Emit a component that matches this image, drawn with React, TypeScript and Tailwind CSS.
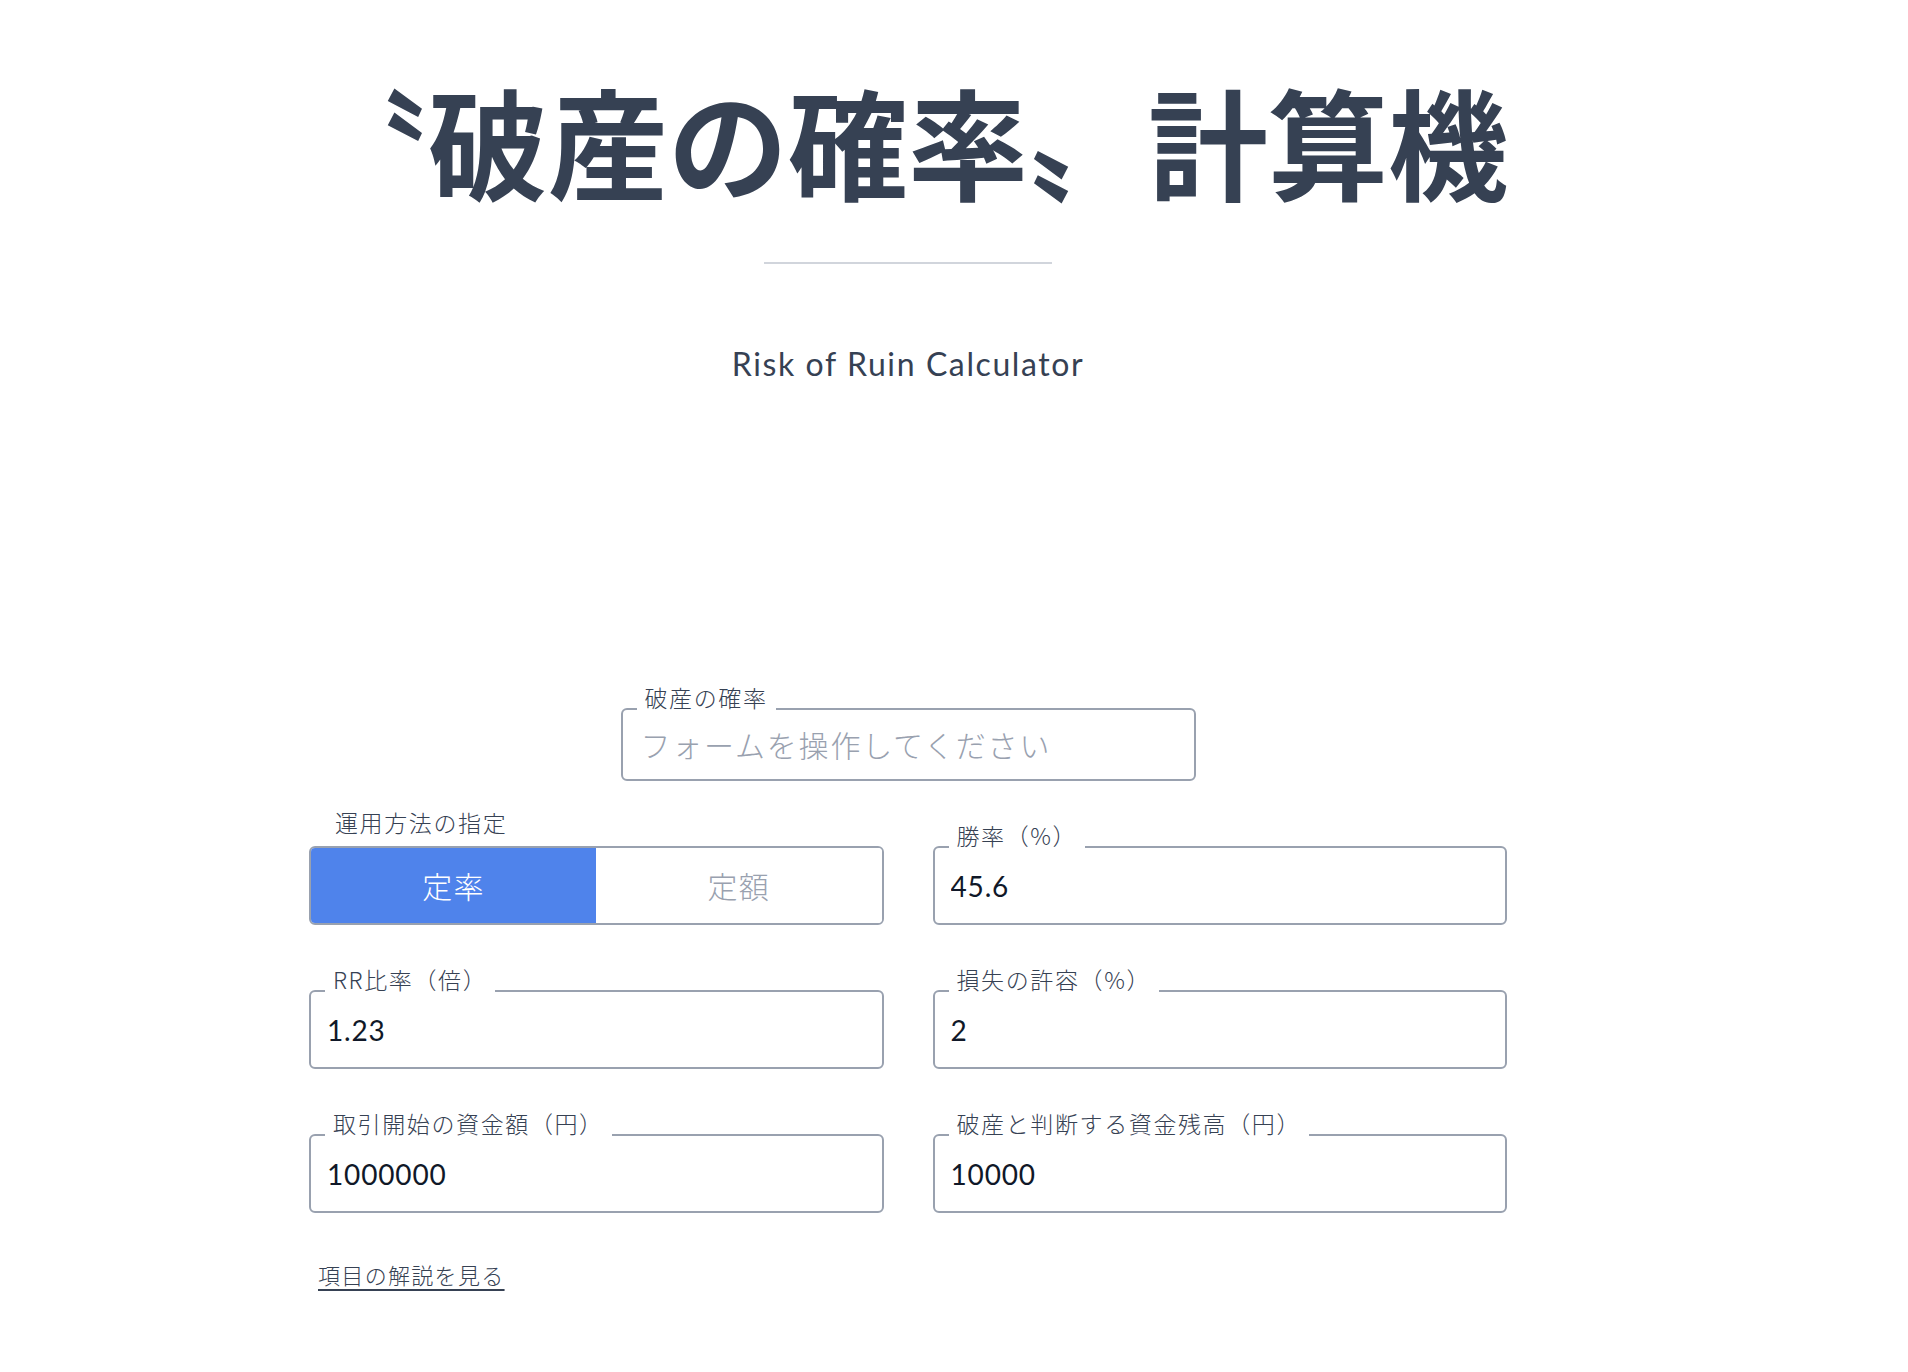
import React, { useState } from 'react';

const jp = "font-['Noto_Sans_CJK_JP',sans-serif]";
const num = "font-['Lato','Noto_Sans_CJK_JP',sans-serif]";
const labelText = `text-[23px] leading-[26px] font-light tracking-[0.07em] text-gray-700 ${jp}`;

interface FieldProps {
  label: string;
  value?: string;
}

const Field: React.FC<FieldProps> = ({ label, value }) => {
  const [v, setV] = useState(value ?? '');
  return (
    <div className="relative">
      <span className={`absolute left-[16px] top-[-24px] bg-white px-[8px] ${labelText}`}>{label}</span>
      <input
        type="text"
        value={v}
        onChange={(e) => setV(e.target.value)}
        className={`h-[79px] w-full rounded-md border-2 border-gray-400 bg-white px-[16px] text-[28px] tracking-[0.03em] text-gray-900 outline-none ${num}`}
      />
    </div>
  );
};

export default function App() {
  const [mode, setMode] = useState<'rate' | 'fixed'>('rate');

  return (
    <div className="min-h-screen bg-white">
      <div className="w-[1816px] pb-24">
        <header className="flex flex-col items-center pt-[74px]">
          <h1 className={`text-[120px] leading-[1.1] font-bold text-gray-700 ${jp}`}>〝破産の確率〟計算機</h1>
          <div className="mt-[56px] h-[2px] w-[288px] bg-gray-300" />
          <p className={`mt-[76px] text-[32px] tracking-[0.05em] text-gray-700 ${num}`}>Risk of Ruin Calculator</p>
        </header>

        <main className="mx-auto mt-[320px] w-[1198px]">
          <div className="mx-auto w-[575px]">
            <div className="relative">
              <span className={`absolute left-[16px] top-[-24px] bg-white px-[8px] ${labelText}`}>破産の確率</span>
              <div className={`flex h-[73px] items-center rounded-md border-2 border-gray-400 px-[18px] text-[30px] font-light tracking-[0.06em] text-gray-400 ${jp}`}>
                フォームを操作してください
              </div>
            </div>
          </div>

          <div className="mt-[28px] grid grid-cols-2 items-end gap-x-[49px] gap-y-[65px]">
            <div>
              <div className={`pl-[26px] ${labelText}`}>運用方法の指定</div>
              <div className="mt-[11px] flex h-[79px] overflow-hidden rounded-md border-2 border-gray-400">
                <button
                  onClick={() => setMode('rate')}
                  className={`flex-1 text-[30px] font-light tracking-[0.05em] ${jp} ${mode === 'rate' ? 'bg-[#4f83eb] text-white' : 'bg-white text-gray-400'}`}
                >
                  定率
                </button>
                <button
                  onClick={() => setMode('fixed')}
                  className={`flex-1 text-[30px] font-light tracking-[0.05em] ${jp} ${mode === 'fixed' ? 'bg-[#4f83eb] text-white' : 'bg-white text-gray-400'}`}
                >
                  定額
                </button>
              </div>
            </div>
            <Field label="勝率（%）" value="45.6" />
            <Field label="RR比率（倍）" value="1.23" />
            <Field label="損失の許容（%）" value="2" />
            <Field label="取引開始の資金額（円）" value="1000000" />
            <Field label="破産と判断する資金残高（円）" value="10000" />
          </div>

          <a
            href="#"
            className={`mt-[48px] ml-[9px] inline-block text-[22px] leading-[26px] font-light tracking-[0.06em] text-gray-700 underline decoration-2 underline-offset-[5px] ${jp}`}
          >
            項目の解説を見る
          </a>
        </main>
      </div>
    </div>
  );
}
